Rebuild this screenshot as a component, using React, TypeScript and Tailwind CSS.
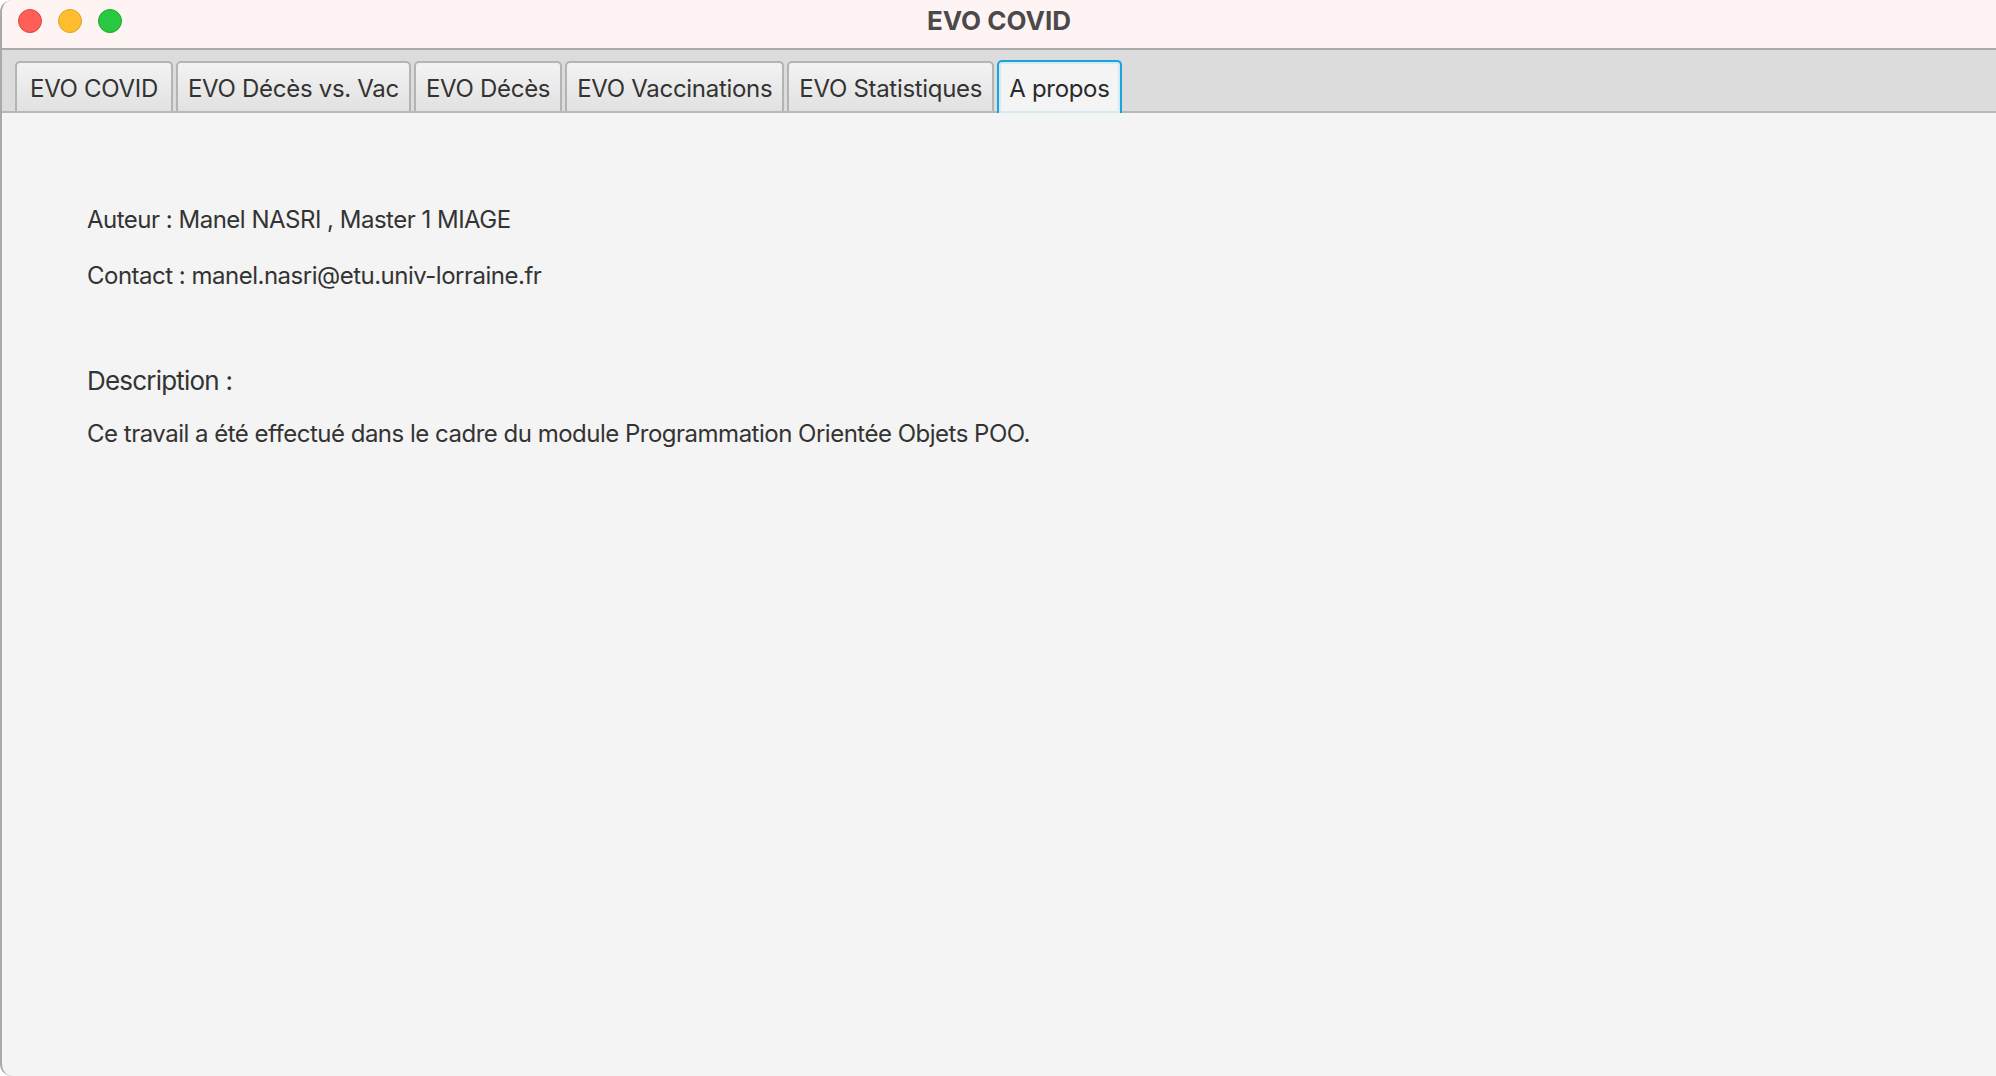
import React from "react";

const tabs = ["EVO COVID", "EVO Décès vs. Vac", "EVO Décès", "EVO Vaccinations", "EVO Statistiques", "A propos"];

export default function App() {
  const active = 5;
  return (
    <div
      className="w-[1996px] h-[1076px] flex flex-col overflow-hidden bg-[#f4f4f4] rounded-tl-[12px] rounded-bl-[12px] border-l-2 border-[#a9a9a9] text-[#333333]"
      style={{ fontFamily: "Inter, 'Noto Sans', sans-serif" }}
    >
      {/* title bar */}
      <div className="h-[50px] shrink-0 grid grid-cols-[1fr_auto_1fr] items-center bg-[#fff4f4] border-b-2 border-[#aaaaaa]">
        <div className="flex items-center gap-[16px] pl-[16px] pb-[6px]">
          <span className="w-[24px] h-[24px] rounded-full bg-[#ff5f57] border border-[#e0443e]" />
          <span className="w-[24px] h-[24px] rounded-full bg-[#febc2e] border border-[#dea123]" />
          <span className="w-[24px] h-[24px] rounded-full bg-[#28c840] border border-[#1aab29]" />
        </div>
        <div className="pb-[8px] text-[26px] font-bold text-[#4a4a4a]">EVO COVID</div>
        <div />
      </div>

      {/* tab strip */}
      <div className="h-[63px] shrink-0 flex items-end gap-[3px] pl-[13px] bg-[#dcdcdc] border-b-2 border-[#b8b8b8]">
        {tabs.map((t, i) =>
          i === active ? (
            <div
              key={t}
              className="h-[53px] -mb-[2px] px-[10px] pt-[3px] flex items-center rounded-t-[5px] border-2 border-b-0 border-[#1ba3dd] bg-[#f4f4f4] shadow-[inset_0_0_0_2px_#d6eaf4] text-[24px] tracking-[-0.3px] text-[#2a2a2a]"
            >
              {t}
            </div>
          ) : (
            <div
              key={t}
              className={
                "h-[50px] pt-[3px] flex items-center rounded-t-[5px] border-2 border-b-0 border-[#b4b4b4] bg-gradient-to-b from-[#f3f3f3] to-[#e1e1e1] text-[24px] tracking-[-0.3px] text-[#333333] " +
                (i === 0 ? "px-[13px]" : "px-[10px]")
              }
            >
              {t}
            </div>
          )
        )}
      </div>

      {/* content */}
      <div className="flex-1 pl-[85px] pt-[92px] text-[24px] tracking-[-0.5px] leading-[30px]">
        <p>Auteur : Manel NASRI , Master 1 MIAGE</p>
        <p className="mt-[26px]">Contact : manel.nasri@etu.univ-lorraine.fr</p>
        <p className="mt-[74px] text-[26px] tracking-[-0.8px] leading-[32px]">Description :</p>
        <p className="mt-[22px]">Ce travail a été effectué dans le cadre du module Programmation Orientée Objets POO.</p>
      </div>
    </div>
  );
}
